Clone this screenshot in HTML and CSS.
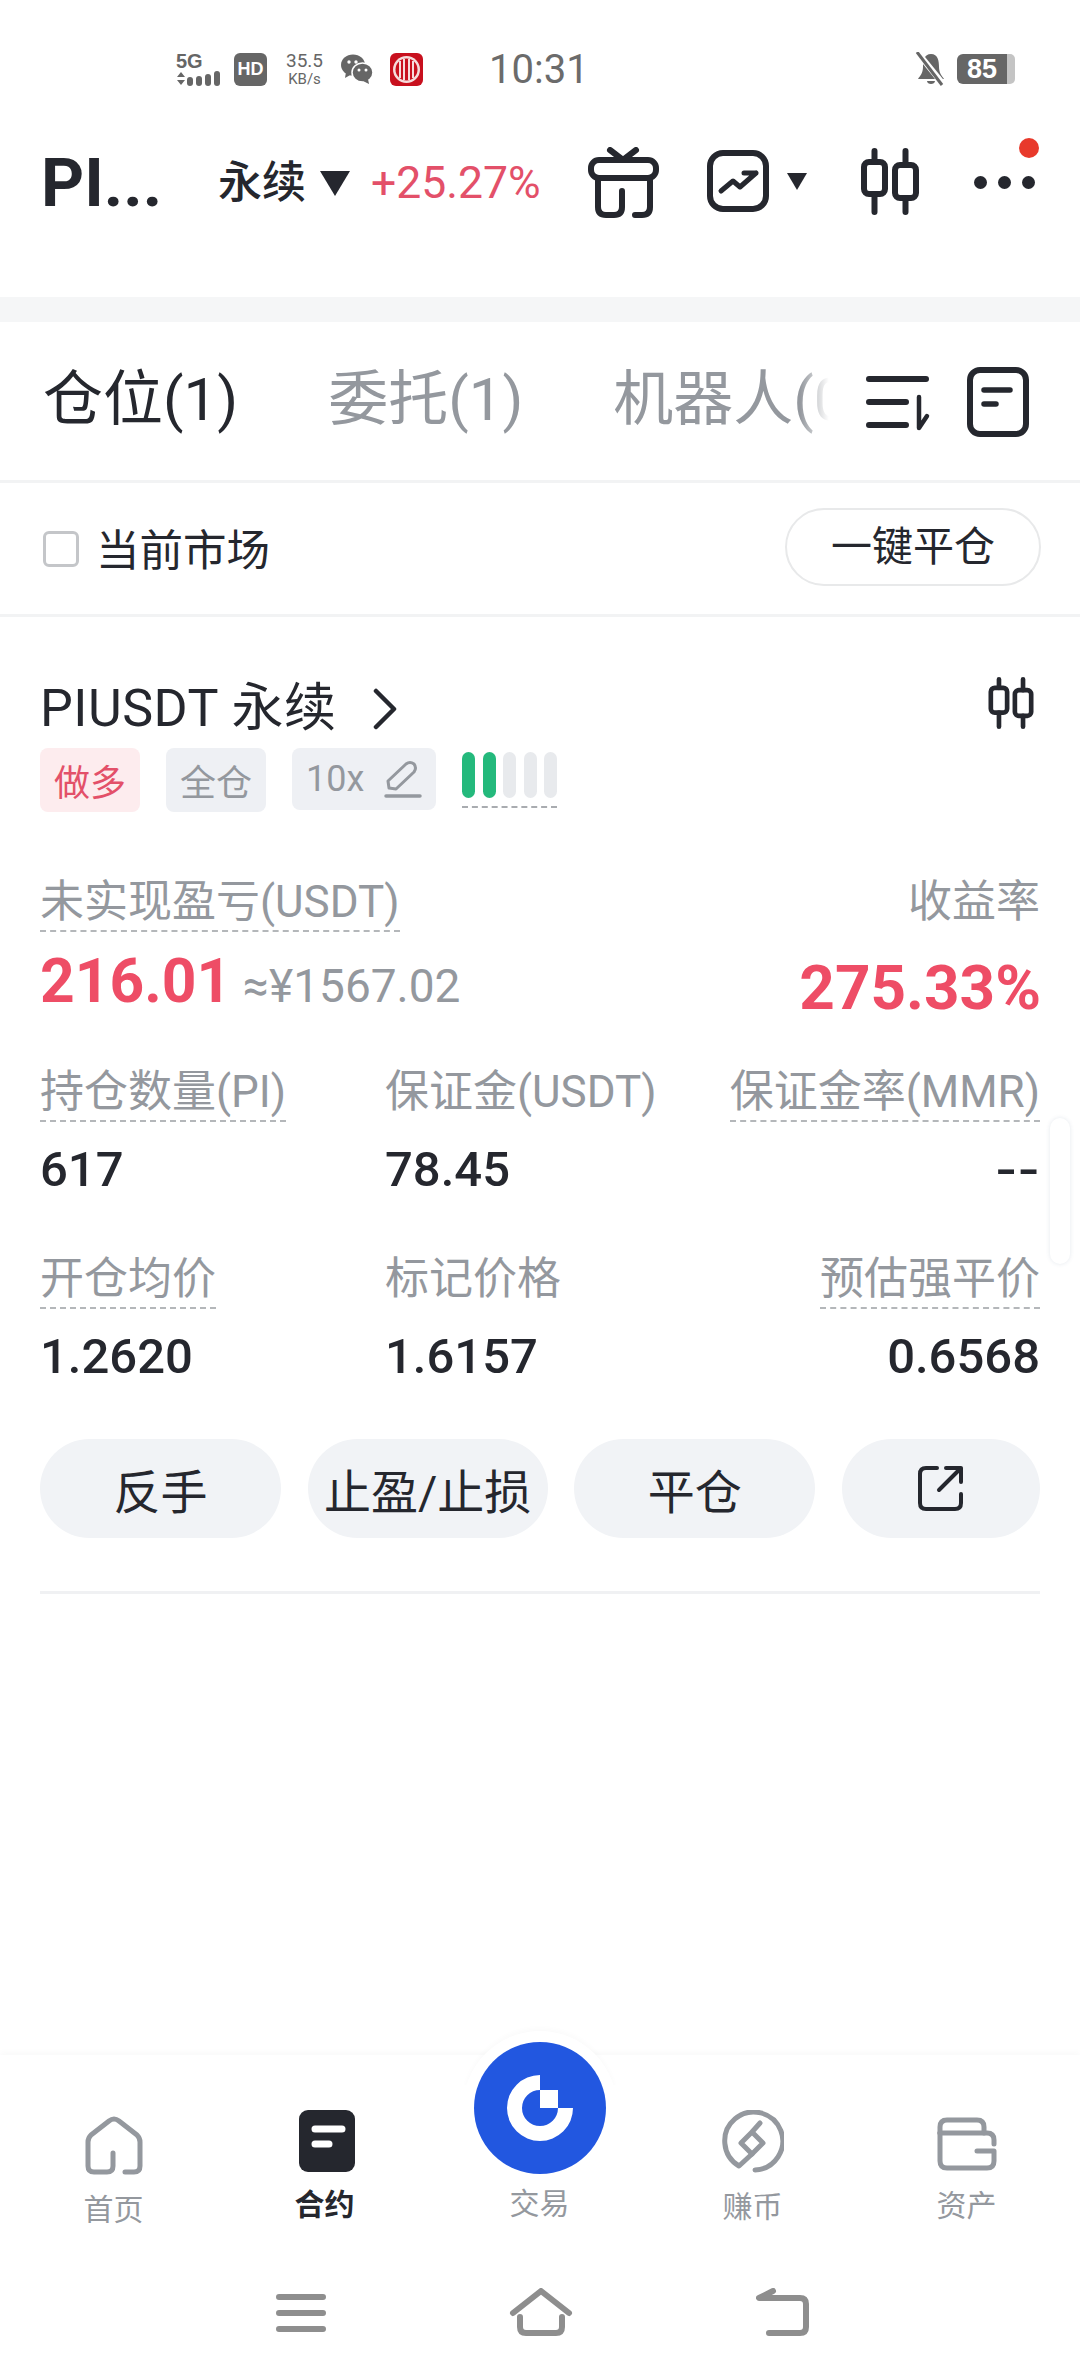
FILE: index.html
```html
<!DOCTYPE html>
<html lang="zh-CN">
  <head>
    <meta charset="UTF-8" />
    <title>PIUSDT 永续</title>
    <link rel="stylesheet" href="styles.css">
  </head>
  <body>
    <!-- status bar -->
    <div class="status">
      <div class="signal">
        <span class="signal-text">5G</span>
        <svg width="44" height="15" viewBox="0 0 44 15"><path d="M1 6 L5 1 L9 6Z M1 9 H9 L5 14Z" fill="#666"/><rect x="11" y="6" width="6" height="9" rx="3" fill="#666"/><rect x="20" y="5" width="6" height="10" rx="3" fill="#666"/><rect x="29" y="3" width="6" height="12" rx="3" fill="#666"/><rect x="38" y="0" width="6" height="15" rx="3" fill="#666"/></svg>
      </div>
      <span class="hd">HD</span>
      <div class="speed"><span>35.5</span><span class="speed-unit">KB/s</span></div>
      <svg class="wechat" width="32" height="30" viewBox="0 0 32 30"><ellipse cx="12" cy="11" rx="12" ry="10.5" fill="#666"/><path d="M5 18 L4 24 L11 20Z" fill="#666"/><ellipse cx="21.5" cy="18.5" rx="10.5" ry="9.5" fill="#666" stroke="#fff" stroke-width="1.5"/><path d="M27 25 L28 30 L22 27Z" fill="#666"/><circle cx="8" cy="8" r="1.7" fill="#fff"/><circle cx="15" cy="8" r="1.7" fill="#fff"/><circle cx="18" cy="16" r="1.5" fill="#fff"/><circle cx="25" cy="16" r="1.5" fill="#fff"/></svg>
      <svg class="citic" width="33" height="33" viewBox="0 0 33 33"><rect width="33" height="33" rx="6" fill="#c8101e"/><circle cx="16.5" cy="16.5" r="13.5" fill="#f6dcdc"/><circle cx="16.5" cy="16.5" r="11" fill="#c8101e"/><path d="M10 8V25M14 6V27M19 6V27M23 8V25" stroke="#f6dcdc" stroke-width="2"/></svg>
      <span class="clock">10:31</span>
      <svg class="bell" width="32" height="34" viewBox="0 0 32 34"><path d="M16 2 C9 2 8 9 8 15 C8 21 5 24 3 27 H29 C27 24 24 21 24 15 C24 9 23 2 16 2Z M12 29 H20 C20 33 12 33 12 29Z" fill="#666"/><path d="M3 1 L28 32" stroke="#fff" stroke-width="6"/><path d="M2 0 L27 33" stroke="#666" stroke-width="3"/></svg>
      <div class="battery"><span class="battery-level">85</span><span class="battery-rest"></span></div>
    </div>

    <!-- symbol header -->
    <header class="head">
      <span class="head-name">PI...</span>
      <span class="head-type">永续</span>
      <span class="tri tri-big"></span>
      <span class="head-change">+25.27%</span>
      <svg class="gift" width="72" height="72" viewBox="0 0 72 72" fill="none" stroke="#25272e" stroke-width="6" stroke-linecap="round" stroke-linejoin="round"><path d="M22 3 L35 13 L48 3"/><rect x="3" y="13" width="65" height="18" rx="8"/><path d="M10 31 V60 Q10 68 18 68 H26 Q34 68 34 60 V44"/><path d="M62 31 V60 Q62 68 54 68 H47"/></svg>
      <svg class="chart" width="62" height="62" viewBox="0 0 62 62" fill="none" stroke="#25272e" stroke-width="6" stroke-linecap="round" stroke-linejoin="round"><rect x="3" y="3" width="56" height="56" rx="13"/><path d="M14 41 L26 31 L33 37 L49 23 M37 23 H49" stroke-width="5"/></svg>
      <span class="tri tri-small"></span>
      <svg class="candle" width="58" height="67" viewBox="0 0 58 67" fill="none" stroke="#25272e" stroke-width="6" stroke-linecap="round" stroke-linejoin="round"><rect x="3" y="14" width="21" height="32" rx="5"/><path d="M13.500 3 V14 M13.500 46 V64"/><rect x="34" y="17" width="21" height="33" rx="5"/><path d="M44.500 3 V17 M44.500 50 V64"/></svg>
      <div class="more"><i></i><i></i><i></i><span class="more-dot"></span></div>
    </header>

    <div class="band"></div>

    <!-- tabs -->
    <nav class="tabs">
      <div class="tab-list">
        <span class="tab tab-on">仓位(1)</span>
        <span class="tab">委托(1)</span>
        <span class="tab">机器人(0)</span>
      </div>
      <svg class="sort" width="66" height="56" viewBox="0 0 66 56" fill="none" stroke="#25272e" stroke-linecap="round" stroke-linejoin="round"><path d="M3 4 H60 M3 27 H40 M3 50 H40" stroke-width="6"/><path d="M53 22 V53 L61 41" stroke-width="4.500"/></svg>
      <svg class="doc" width="62" height="70" viewBox="0 0 62 70" fill="none" stroke="#25272e" stroke-linecap="round"><rect x="3" y="3" width="56" height="64" rx="10" stroke-width="6"/><path d="M17 23 H43 M17 37 H29" stroke-width="5.500"/></svg>
    </nav>

    <!-- market filter -->
    <div class="filter">
      <span class="check"></span>
      <span class="filter-label">当前市场</span>
      <span class="close-all">一键平仓</span>
    </div>

    <!-- position card -->
    <main class="position">
      <div class="pos-title">
        <span class="pos-name">PIUSDT 永续</span>
        <svg class="chevron" width="24" height="42" viewBox="0 0 24 42" fill="none" stroke="#25272e" stroke-width="4.500" stroke-linecap="round" stroke-linejoin="round"><path d="M3 3 L21 21 L3 39"/></svg>
        <svg class="pos-candle" width="48" height="52" viewBox="0 0 58 67" fill="none" stroke="#25272e" stroke-width="6" stroke-linecap="round" stroke-linejoin="round"><rect x="3" y="14" width="21" height="32" rx="5"/><path d="M13.500 3 V14 M13.500 46 V64"/><rect x="34" y="17" width="21" height="33" rx="5"/><path d="M44.500 3 V17 M44.500 50 V64"/></svg>
      </div>

      <div class="tags">
        <span class="tag tag-long">做多</span>
        <span class="tag">全仓</span>
        <span class="tag tag-lev">10x
          <svg width="38" height="38" viewBox="0 0 38 38" fill="none" stroke="#94989e" stroke-linecap="round" stroke-linejoin="round"><path d="M5 28 L4 21 L22 4 Q26 1 30 4 Q33 8 30 12 L12 29Z" stroke-width="3"/><path d="M2 36 H36" stroke-width="3.500"/></svg>
        </span>
        <div class="risk"><i class="on"></i><i class="on"></i><i></i><i></i><i></i></div>
      </div>

      <div class="pnl-head">
        <span class="label dash">未实现盈亏(USDT)</span>
        <span class="label">收益率</span>
      </div>
      <div class="pnl-values">
        <span class="pnl-main">216.01</span>
        <span class="pnl-cny">≈¥1567.02</span>
        <span class="pnl-rate">275.33%</span>
      </div>

      <div class="stats">
        <div class="stat"><span class="label dash">持仓数量(PI)</span><span class="stat-value">617</span></div>
        <div class="stat"><span class="label">保证金(USDT)</span><span class="stat-value">78.45</span></div>
        <div class="stat stat-right"><span class="label dash">保证金率(MMR)</span><span class="stat-value stat-empty">--</span></div>
        <div class="stat"><span class="label dash">开仓均价</span><span class="stat-value">1.2620</span></div>
        <div class="stat"><span class="label">标记价格</span><span class="stat-value">1.6157</span></div>
        <div class="stat stat-right"><span class="label dash">预估强平价</span><span class="stat-value">0.6568</span></div>
      </div>

      <div class="actions">
        <span class="action">反手</span>
        <span class="action">止盈/止损</span>
        <span class="action">平仓</span>
        <span class="action action-share">
          <svg width="48" height="48" viewBox="0 0 48 48" fill="none" stroke="#25272e" stroke-width="4" stroke-linecap="round" stroke-linejoin="round"><path d="M20 3 H9 Q3 3 3 9 V38 Q3 44 9 44 H38 Q44 44 44 38 V29"/><path d="M22 25 L44 3 M29 3 H44 V17"/></svg>
        </span>
      </div>
      <div class="pos-line"></div>
    </main>

    <div class="scroll-thumb"></div>

    <!-- bottom tabs -->
    <footer class="bottom">
      <div class="bottom-item">
        <svg class="bottom-icon" width="58" height="59" viewBox="0 0 58 59" fill="none" stroke="#94989e" stroke-width="5" stroke-linecap="round" stroke-linejoin="round"><path d="M28 37 V50 Q28 56 22 56 H9 Q3 56 3 50 V26 Q3 22 6 19 L24 5 Q29 1 34 5 L52 19 Q55 22 55 26 V50 Q55 56 49 56 H40"/></svg>
        <span class="bottom-label bottom-label-low">首页</span>
      </div>
      <div class="bottom-item">
        <svg class="bottom-icon" width="56" height="62" viewBox="0 0 56 62"><rect width="56" height="62" rx="9" fill="#25272e"/><path d="M16 19 H43 M16 34 H30" stroke="#fff" stroke-width="7" stroke-linecap="round"/></svg>
        <span class="bottom-label bottom-label-on">合约</span>
      </div>
      <div class="bottom-item bottom-trade">
        <div class="trade-btn">
          <svg width="132" height="132" viewBox="0 0 132 132"><circle cx="66" cy="66" r="66" fill="#2257e0"/><path d="M66 33 A33 33 0 1 0 99 66 H84 A18 18 0 1 1 66 48Z M66 48 H84 V66 H66Z" fill="#fff"/></svg>
        </div>
        <span class="bottom-label">交易</span>
      </div>
      <div class="bottom-item">
        <svg class="bottom-icon" width="62" height="63" viewBox="0 0 62 63" fill="none" stroke="#94989e" stroke-width="5" stroke-linecap="round" stroke-linejoin="round"><path d="M33 60 A29 29 0 1 0 17 56 L30 44"/><path d="M19 33 L30 22 L41 33 L30 44Z M30 22 L38 13"/></svg>
        <span class="bottom-label">赚币</span>
      </div>
      <div class="bottom-item">
        <svg class="bottom-icon" width="60" height="54" viewBox="0 0 60 54" fill="none" stroke="#94989e" stroke-width="5" stroke-linecap="round" stroke-linejoin="round"><path d="M3 16 V10 Q3 3 10 3 H40 Q47 3 47 10 V16"/><path d="M3 16 H50 Q57 16 57 23 V27"/><path d="M3 16 V44 Q3 51 10 51 H50 Q57 51 57 44 V34 H40"/></svg>
        <span class="bottom-label">资产</span>
      </div>
    </footer>

    <!-- system navigation -->
    <div class="sysnav">
      <svg class="sys-menu" width="50" height="40" viewBox="0 0 50 40" fill="none" stroke="#8e8e8e" stroke-width="6" stroke-linecap="round"><path d="M3 4 H47 M3 20 H47 M3 36 H47"/></svg>
      <svg width="64" height="48" viewBox="0 0 64 48" fill="none" stroke="#8e8e8e" stroke-width="6" stroke-linecap="round" stroke-linejoin="round"><path d="M4 25 L32 3 L60 25"/><path d="M11 29 V39 Q11 45 17 45 H47 Q53 45 53 39 V29"/></svg>
      <svg width="54" height="48" viewBox="0 0 54 48" fill="none" stroke="#8e8e8e" stroke-width="6" stroke-linecap="round" stroke-linejoin="round"><path d="M17 3 L3 10 H44 Q50 10 50 16 V39 Q50 45 44 45 H13"/></svg>
    </div>
  </body>
</html>
```

FILE: styles.css
```css
* {
  box-sizing: border-box;
}
html,
body {
  margin: 0;
  height: 100%;
}
body {
  display: flex;
  flex-direction: column;
  position: relative;
  width: 1080px;
  height: 2376px;
  overflow: hidden;
  background-color: #fff;
  color: #25272e;
  font-family: Roboto, "Noto Sans CJK SC", sans-serif;
}

/* status bar */
.status {
  display: flex;
  align-items: center;
  height: 100px;
  padding: 38px 0 0 176px;
  color: #666;
}
.signal {
  display: flex;
  flex-direction: column;
  width: 44px;
  margin-right: 14px;
}
.signal-text {
  font: 700 20px/19px "Liberation Sans", sans-serif;
}
.hd {
  width: 33px;
  height: 33px;
  margin-right: 17px;
  border-radius: 6px;
  background-color: #666;
  color: #fff;
  font: 700 18px/33px "Liberation Sans", sans-serif;
  text-align: center;
}
.speed {
  display: flex;
  flex-direction: column;
  align-items: center;
  width: 41px;
  margin-right: 16px;
  font-size: 19px;
  line-height: 20px;
}
.speed-unit {
  font-size: 15px;
  line-height: 16px;
}
.wechat {
  margin-right: 17px;
}
.clock {
  margin-left: 66px;
  width: 426px;
  padding-top: 2px;
  color: #6b6b6b;
  font-size: 40px;
  line-height: 48px;
}
.bell {
  margin-right: 10px;
}
.battery {
  display: flex;
  align-items: stretch;
  height: 30px;
}
.battery-level {
  width: 50px;
  border-radius: 6px 0 0 6px;
  background-color: #666;
  color: #fff;
  font: 700 27px/30px "Liberation Sans", sans-serif;
  text-align: center;
}
.battery-rest {
  width: 8px;
  border-radius: 0 5px 5px 0;
  background-color: #c4c4c4;
}

/* symbol header */
.head {
  display: flex;
  align-items: flex-start;
  height: 197px;
  padding: 45px 0 0 41px;
}
.head-name {
  width: 177px;
  padding-top: 2px;
  font-size: 67px;
  font-weight: 700;
  line-height: 72px;
}
.head-type {
  width: 102px;
  padding-top: 2px;
  font-size: 44px;
  font-weight: 500;
  line-height: 72px;
}
.tri {
  width: 0;
  height: 0;
  border-style: solid;
  border-color: #25272e transparent transparent;
}
.tri-big {
  margin: 26px 21px 0 0;
  border-width: 25px 15px 0;
}
.head-change {
  width: 217px;
  padding-top: 2px;
  color: #e35069;
  font-size: 44.500px;
  line-height: 72px;
}
.gift {
  margin-top: 2px;
}
.chart {
  margin: 5px 0 0 47px;
}
.tri-small {
  margin: 28px 54px 0 18px;
  border-width: 17px 10px 0;
}
.candle {
  margin-top: 3px;
}
.more {
  display: flex;
  position: relative;
  gap: 11px;
  margin: 31px 0 0 55px;
}
.more i {
  width: 13px;
  height: 13px;
  border-radius: 50%;
  background-color: #25272e;
}
.more-dot {
  position: absolute;
  top: -38px;
  right: -4px;
  width: 20px;
  height: 20px;
  border-radius: 50%;
  background-color: #e8392b;
}
.band {
  height: 25px;
  background-color: #f5f6f7;
}

/* tabs */
.tabs {
  display: flex;
  align-items: flex-start;
  height: 161px;
  padding-left: 43px;
  border-bottom: 3px solid #f2f3f4;
}
.tab-list {
  display: flex;
  position: relative;
  gap: 90px;
  width: 789px;
  margin-right: 34px;
  padding-top: 36px;
  overflow: hidden;
  white-space: nowrap;
}
.tab-list::after {
  content: "";
  position: absolute;
  top: 0;
  right: 0;
  bottom: 0;
  width: 32px;
  background: linear-gradient(to right, rgba(255, 255, 255, 0), #fff 90%);
}
.tab {
  color: #94989e;
  font-size: 60px;
  line-height: 84px;
}
.tab-on {
  color: #25272e;
}
.sort {
  margin-top: 53px;
}
.doc {
  margin: 45px 0 0 35px;
}

/* market filter */
.filter {
  display: flex;
  align-items: center;
  height: 134px;
  padding: 0 39px 0 43px;
  border-bottom: 3px solid #f2f3f4;
}
.check {
  width: 36px;
  height: 36px;
  margin-right: 17px;
  border: 3px solid #c4c6c9;
  border-radius: 6px;
}
.filter-label {
  flex: 1;
  position: relative;
  top: -1px;
  font-size: 43.500px;
}
.close-all {
  width: 256px;
  height: 78px;
  margin-top: -3px;
  border: 2px solid #e8e9ea;
  border-radius: 39px;
  font-size: 41px;
  line-height: 74px;
  text-align: center;
}

/* position card */
.position {
  flex: 1;
  padding: 60px 40px 0;
}
.pos-title {
  display: flex;
  align-items: center;
  height: 64px;
}
.pos-name {
  flex: none;
  font-size: 52px;
  line-height: 64px;
  letter-spacing: 0.5px;
  white-space: pre;
}
.chevron {
  margin-left: 37px;
}
.pos-candle {
  margin: -13px 5px 0 auto;
}
.tags {
  display: flex;
  align-items: flex-start;
  gap: 26px;
  height: 66px;
  margin-top: 7px;
}
.tag {
  display: flex;
  align-items: center;
  gap: 20px;
  height: 64px;
  padding: 0 14px;
  border-radius: 8px;
  background-color: #eef0f4;
  color: #94989e;
  font-size: 36px;
}
.tag-long {
  background-color: #fdecee;
  color: #e35069;
}
.tag-lev {
  height: 62px;
  padding-right: 14px;
}
.risk {
  display: flex;
  gap: 7.500px;
  height: 60px;
  padding-top: 4px;
  border-bottom: 2px dashed #a9acb0;
}
.risk i {
  width: 13px;
  height: 46px;
  border-radius: 7px;
  background-color: #e8eaed;
}
.risk .on {
  background-color: #24b97c;
}
.pnl-head {
  display: flex;
  justify-content: space-between;
  align-items: flex-start;
  margin: 60px 0 0;
}
.label {
  display: inline-block;
  padding: 2px 0;
  color: #94989e;
  font-size: 44px;
  line-height: 52px;
  white-space: nowrap;
  border-bottom: 2px solid transparent;
}
.dash {
  border-bottom: 2px dashed #b4b7ba;
}
.pnl-values {
  display: flex;
  align-items: baseline;
  height: 74px;
  margin: 12px -1px 0 0;
}
.pnl-main {
  color: #ee4d66;
  font-size: 60.500px;
  font-weight: 700;
  line-height: 74px;
}
.pnl-cny {
  margin-left: 12px;
  color: #94989e;
  font-size: 46px;
}
.pnl-rate {
  margin-left: auto;
  position: relative;
  top: 7px;
  color: #ee4d66;
  font-size: 62px;
  font-weight: 700;
}
.stats {
  display: grid;
  grid-template-columns: 345px 345px 310px;
  row-gap: 52px;
  margin-top: 46px;
}
.stat {
  display: flex;
  flex-direction: column;
  align-items: flex-start;
}
.stat-right {
  align-items: flex-end;
}
.stat-value {
  margin-top: 19px;
  font-size: 49px;
  font-weight: 500;
  line-height: 58px;
}
.stat-empty {
  font-family: Inter, sans-serif;
}
.actions {
  display: flex;
  gap: 26.670px;
  margin-top: 53px;
}
.action {
  display: flex;
  align-items: center;
  justify-content: center;
  width: 241px;
  height: 99px;
  border-radius: 50px;
  background-color: #f1f3f6;
  font-size: 47px;
  white-space: nowrap;
}
.action-share {
  width: 198px;
}
.action:nth-child(2) {
  width: 240px;
}
.pos-line {
  height: 3px;
  margin-top: 53px;
  background-color: #f0f1f3;
}
.scroll-thumb {
  position: absolute;
  top: 1118px;
  left: 1050px;
  width: 20px;
  height: 146px;
  border-radius: 10px;
  background-color: #fff;
  box-shadow: 0 0 4px rgba(90, 110, 140, 0.16);
}

/* bottom tabs */
.bottom {
  display: grid;
  grid-template-columns: repeat(5, 213px);
  height: 190px;
  padding-left: 7px;
  box-shadow: 0 -3px 6px rgba(0, 0, 0, 0.025);
}
.bottom-item {
  display: flex;
  flex-direction: column;
  align-items: center;
  padding-top: 55px;
}
.bottom-icon {
  display: block;
}
.bottom-icon + .bottom-label {
  margin-top: 15px;
}
.bottom-label {
  color: #94989e;
  font-size: 30px;
  line-height: 36px;
}
.bottom-label-on {
  margin-right: 4px;
  color: #25272e;
  font-weight: 700;
}
.bottom-item:first-child {
  padding-top: 61px;
}
.bottom-item:first-child .bottom-label {
  margin-top: 17px;
}
.bottom-item:nth-child(4) .bottom-label {
  margin-top: 16px;
}
.bottom-item:nth-child(5) {
  padding: 62px 0 0 2px;
}
.bottom-item:nth-child(5) .bottom-label {
  margin-top: 17px;
}
.bottom-trade {
  padding-top: 0;
  position: relative;
}
.trade-btn {
  position: relative;
  height: 132px;
  margin: -13px 0 12px;
}
.trade-btn::before {
  content: "";
  position: absolute;
  top: -11px;
  left: -11px;
  width: 154px;
  height: 154px;
  border-radius: 50%;
  background-color: #fff;
  box-shadow: 0 -3px 5px rgba(0, 0, 0, 0.02);
  clip-path: inset(-12px -12px 100px);
}
.trade-btn svg {
  display: block;
  position: relative;
}

/* system navigation */
.sysnav {
  display: flex;
  align-items: flex-start;
  justify-content: space-between;
  height: 131px;
  padding: 43px 270px 0 276px;
}
.sys-menu {
  margin-top: 5px;
}
```
